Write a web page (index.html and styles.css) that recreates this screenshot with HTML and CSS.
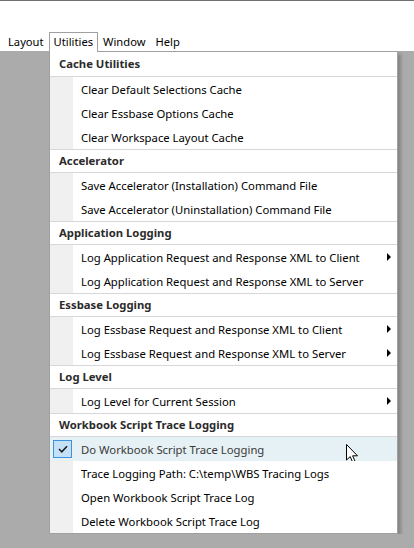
FILE: index.html
```html
<!DOCTYPE html>
<html lang="en">

<head>
  <meta charset="UTF-8">
  <meta name="viewport" content="width=device-width, initial-scale=1.0">
  <title>Utilities</title>
  <link rel="stylesheet" href="styles.css">
</head>

<body>
  <header class="menubar">
    <div class="bar-item">Layout</div>
    <div class="bar-item open">Utilities</div>
    <div class="bar-item">Window</div>
    <div class="bar-item">Help</div>
  </header>

  <div class="dropdown">
    <section class="group">
      <div class="group-title">Cache Utilities</div>
      <div class="entry">Clear Default Selections Cache</div>
      <div class="entry">Clear Essbase Options Cache</div>
      <div class="entry">Clear Workspace Layout Cache</div>
    </section>

    <section class="group">
      <div class="group-title">Accelerator</div>
      <div class="entry">Save Accelerator (Installation) Command File</div>
      <div class="entry">Save Accelerator (Uninstallation) Command File</div>
    </section>

    <section class="group">
      <div class="group-title">Application Logging</div>
      <div class="entry sub">Log Application Request and Response XML to Client</div>
      <div class="entry">Log Application Request and Response XML to Server</div>
    </section>

    <section class="group">
      <div class="group-title">Essbase Logging</div>
      <div class="entry sub">Log Essbase Request and Response XML to Client</div>
      <div class="entry sub">Log Essbase Request and Response XML to Server</div>
    </section>

    <section class="group">
      <div class="group-title">Log Level</div>
      <div class="entry sub">Log Level for Current Session</div>
    </section>

    <section class="group">
      <div class="group-title">Workbook Script Trace Logging</div>
      <div class="entry hover">
        <span class="check">
          <svg width="10" height="8" viewBox="0 0 10 8">
            <path d="M1 4 L3.8 6.8 L9 1.2" fill="none" stroke="#1a1a1a" stroke-width="1.5" />
          </svg>
        </span>
        Do Workbook Script Trace Logging
        <!-- mouse pointer resting on the row -->
        <svg class="pointer" width="13" height="20" viewBox="0 0 13 20">
          <path d="M0.5 0.5 L0.5 16 L4.2 12.6 L6.8 18.6 L9.2 17.6 L6.6 11.8 L11.5 11.8 Z" fill="#fff" stroke="#000" stroke-width="1" />
        </svg>
      </div>
      <div class="entry">Trace Logging Path: C:\temp\WBS Tracing Logs</div>
      <div class="entry">Open Workbook Script Trace Log</div>
      <div class="entry">Delete Workbook Script Trace Log</div>
    </section>
  </div>
</body>

</html>
```

FILE: styles.css
```css
body {
  margin: 0;
  background: #ababab;
  font-family: "Noto Sans", "Open Sans", sans-serif;
  font-size: 11.3px;
  color: #000;
}

/* top menu strip */
.menubar {
  display: flex;
  align-items: flex-end;
  height: 50px;
  padding-left: 3px;
  background: #fff;
  border-top: 1px solid #707070;
}

.bar-item {
  height: 19px;
  line-height: 18px;
  padding: 0 4px;
  font-size: 11.2px;
  border: 1px solid transparent;
  border-bottom: none;
  margin-bottom: -1px;
  position: relative;
  z-index: 1;
}

.bar-item.open {
  background: #fff;
  border-color: #a0a0a0;
}

/* the opened Utilities menu */
.dropdown {
  margin-left: 49px;
  width: 347px;
  background: #fff;
  border: 1px solid #a0a0a0;
  box-shadow: 3px 3px 3px rgba(0, 0, 0, 0.22);
}

.group + .group {
  border-top: 1px solid #d7d7d7;
}

.group-title {
  height: 22px;
  line-height: 22px;
  padding-left: 9px;
  font-weight: bold;
  color: #2b2b2b;
  border-bottom: 1px solid #d7d7d7;
}

.group:first-child .group-title {
  height: 24px;
  line-height: 24px;
}

.entry {
  height: 24px;
  display: flex;
  align-items: center;
  padding-left: 31px;
  position: relative;
  background: linear-gradient(to right, #f0f0f0 23px, #fff 23px);
}

.entry.sub::after {
  content: "";
  position: absolute;
  right: 6px;
  top: 50%;
  margin-top: -4px;
  border-left: 4px solid #000;
  border-top: 4px solid transparent;
  border-bottom: 4px solid transparent;
}

.entry.hover {
  background: #e5f1f4;
  color: #3a3a3a;
}

.check {
  position: absolute;
  left: 3px;
  top: 3px;
  width: 17px;
  height: 16px;
  display: flex;
  align-items: center;
  justify-content: center;
  background: #c5e1f8;
  border: 1px solid #3d92de;
}

.pointer {
  position: absolute;
  left: 296px;
  top: 7px;
}
```
